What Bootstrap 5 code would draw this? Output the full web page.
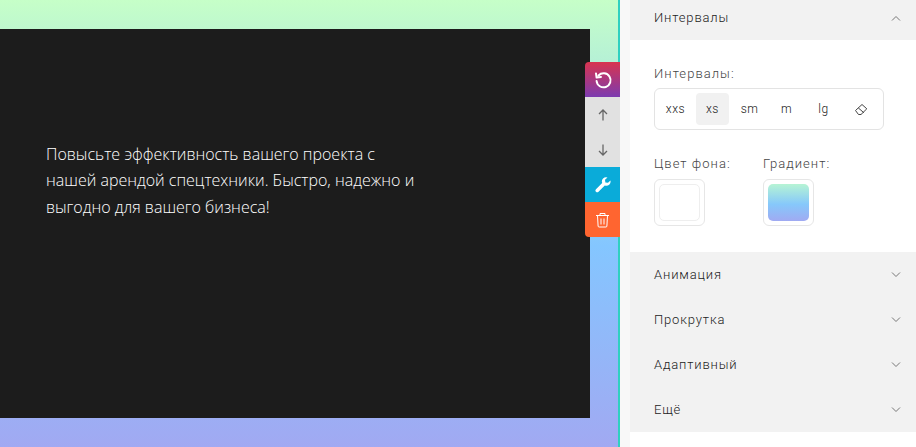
<!DOCTYPE html>
<html lang="ru"><head><meta charset="utf-8"><title>Редактор</title>
<link href="https://cdn.jsdelivr.net/npm/bootstrap@5.3.0/dist/css/bootstrap.min.css" rel="stylesheet">
<style>
html,body{height:447px;overflow:hidden;background:#fff}
.stage{width:916px;height:447px}
.canvas-zone{width:620px;height:447px;position:relative;background:linear-gradient(180deg,#c6ffc8 0%,#84c6ff 55%,#a1a9f2 100%) padding-box;border-right:2px solid #2fd0c0;padding-top:29px}
.dark-block{width:590px;height:389px;background:#1c1c1c;padding:112px 0 0 46px}
.dark-text{width:375px;font:300 16px/26.4px "Open Sans",sans-serif;color:#fff;margin:0}
.tools{position:absolute;left:585px;top:62px;width:35px;border-radius:4px 0 0 4px;overflow:hidden}
.tool{height:35px;display:flex;align-items:center;justify-content:center;color:#fff}
.tool-undo{background:linear-gradient(180deg,#d8344f,#7c3bb0)}
.tool-move{background:#e1e1e1;color:#666}
.tool-set{background:#0aabd9}
.tool-del{background:#ff6530}
.strip{width:10px;background:#f8f8f8}
.side{width:286px;font-family:Roboto,sans-serif;font-size:13px;font-weight:300;letter-spacing:.85px}
.head{height:45px;background:#f2f2f2;color:#222;padding:0 15px 0 24px}
.head-open{height:40px;padding-bottom:5px}
.body-open{height:212px;padding:26px 24px 0}
.lbl{color:#444;line-height:16px;margin-bottom:7px;letter-spacing:1.05px}
.stack-lbl{margin-bottom:6px}
.sizes{width:230px;height:42px;border:1px solid #e3e3e3;border-radius:6px;padding:0 4px;margin-bottom:26px;font-size:12px;letter-spacing:.5px;color:#222;gap:4px}
.size-it{width:33px;height:32px;display:flex;align-items:center;justify-content:center;border-radius:4px}
.size-on{background:#f1f1f1}
.swatch-wrap{width:51px;height:47px;border:1px solid #e6e6e6;border-radius:6px;padding:4px}
.swatch{height:37px;border:1px solid #eee;border-radius:5px;background:#fff}
.swatch-grad{border:0;background:linear-gradient(180deg,#b6f4d4,#86c8fb 55%,#a0aaf2)}
.col-color{width:109px}
</style></head><body>
<div class="stage d-flex">
 <div class="canvas-zone flex-shrink-0">
  <div class="dark-block"><p class="dark-text">Повысьте эффективность вашего проекта с нашей арендой спецтехники. Быстро, надежно и выгодно для вашего бизнеса!</p></div>
  <div class="tools">
   <div class="tool tool-undo"><svg width="20" height="20" viewBox="0 0 20 20" fill="none" stroke="currentColor" stroke-width="2" stroke-linecap="round" stroke-linejoin="round"><path d="M5.500 5.500A7 7 0 1 1 3.600 11"/><path d="M3 3.400 3.600 7.600 8 7"/></svg></div>
   <div class="tool tool-move"><svg width="14" height="14" viewBox="0 0 14 14" fill="none" stroke="currentColor" stroke-width="1.300"><path d="M7 12.500V2M3 6l4-4 4 4"/></svg></div>
   <div class="tool tool-move"><svg width="14" height="14" viewBox="0 0 14 14" fill="none" stroke="currentColor" stroke-width="1.300"><path d="M7 1.500V12M3 8l4 4 4-4"/></svg></div>
   <div class="tool tool-set"><svg width="16" height="16" viewBox="0 0 16 16" fill="currentColor"><path d="M15.400 3.400 13 5.800 10.400 5.400 10 2.800 12.500.5A4.200 4.200 0 0 0 7.200 6L1 12.200A1.700 1.700 0 0 0 3.500 14.700L9.800 8.500A4.200 4.200 0 0 0 15.400 3.400z"/></svg></div>
   <div class="tool tool-del"><svg width="15" height="16" viewBox="0 0 15 16" fill="none" stroke="currentColor" stroke-width="1" stroke-linejoin="round"><path d="M1 3.500h13M5 3.500V1.500h5v2M2.500 3.500l.6 10.500a1 1 0 0 0 1 1h6.800a1 1 0 0 0 1-1l.6-10.500M6 6.500v6M9 6.500v6"/></svg></div>
  </div>
 </div>
 <div class="strip flex-shrink-0"></div>
 <div class="side flex-shrink-0">
  <div class="head head-open d-flex align-items-center justify-content-between"><span>Интервалы</span><svg width="10" height="6" viewBox="0 0 10 6" fill="none" stroke="#777" stroke-width="1"><path d="M1 5.500 5 1.500l4 4"/></svg></div>
  <div class="body-open">
   <div class="lbl stack-lbl">Интервалы:</div>
   <div class="sizes d-flex align-items-center">
    <div class="size-it">xxs</div><div class="size-it size-on">xs</div><div class="size-it">sm</div><div class="size-it">m</div><div class="size-it">lg</div>
    <div class="size-it"><svg width="14" height="13" viewBox="0 0 14 13" fill="none" stroke="#444" stroke-width="1" stroke-linejoin="round"><path d="M1.500 7.500 8 1.500 12.800 5.800 7 11.500H4.500zM4.300 4.900 9.900 9.800"/></svg></div>
   </div>
   <div class="d-flex">
    <div class="col-color"><div class="lbl">Цвет фона:</div><div class="swatch-wrap"><div class="swatch"></div></div></div>
    <div><div class="lbl">Градиент:</div><div class="swatch-wrap"><div class="swatch swatch-grad"></div></div></div>
   </div>
  </div>
  <div class="head d-flex align-items-center justify-content-between"><span>Анимация</span><svg width="10" height="6" viewBox="0 0 10 6" fill="none" stroke="#777" stroke-width="1"><path d="M1 .5l4 4 4-4"/></svg></div>
  <div class="head d-flex align-items-center justify-content-between"><span>Прокрутка</span><svg width="10" height="6" viewBox="0 0 10 6" fill="none" stroke="#777" stroke-width="1"><path d="M1 .5l4 4 4-4"/></svg></div>
  <div class="head d-flex align-items-center justify-content-between"><span>Адаптивный</span><svg width="10" height="6" viewBox="0 0 10 6" fill="none" stroke="#777" stroke-width="1"><path d="M1 .5l4 4 4-4"/></svg></div>
  <div class="head d-flex align-items-center justify-content-between"><span>Ещё</span><svg width="10" height="6" viewBox="0 0 10 6" fill="none" stroke="#777" stroke-width="1"><path d="M1 .5l4 4 4-4"/></svg></div>
 </div>
</div>
</body></html>
